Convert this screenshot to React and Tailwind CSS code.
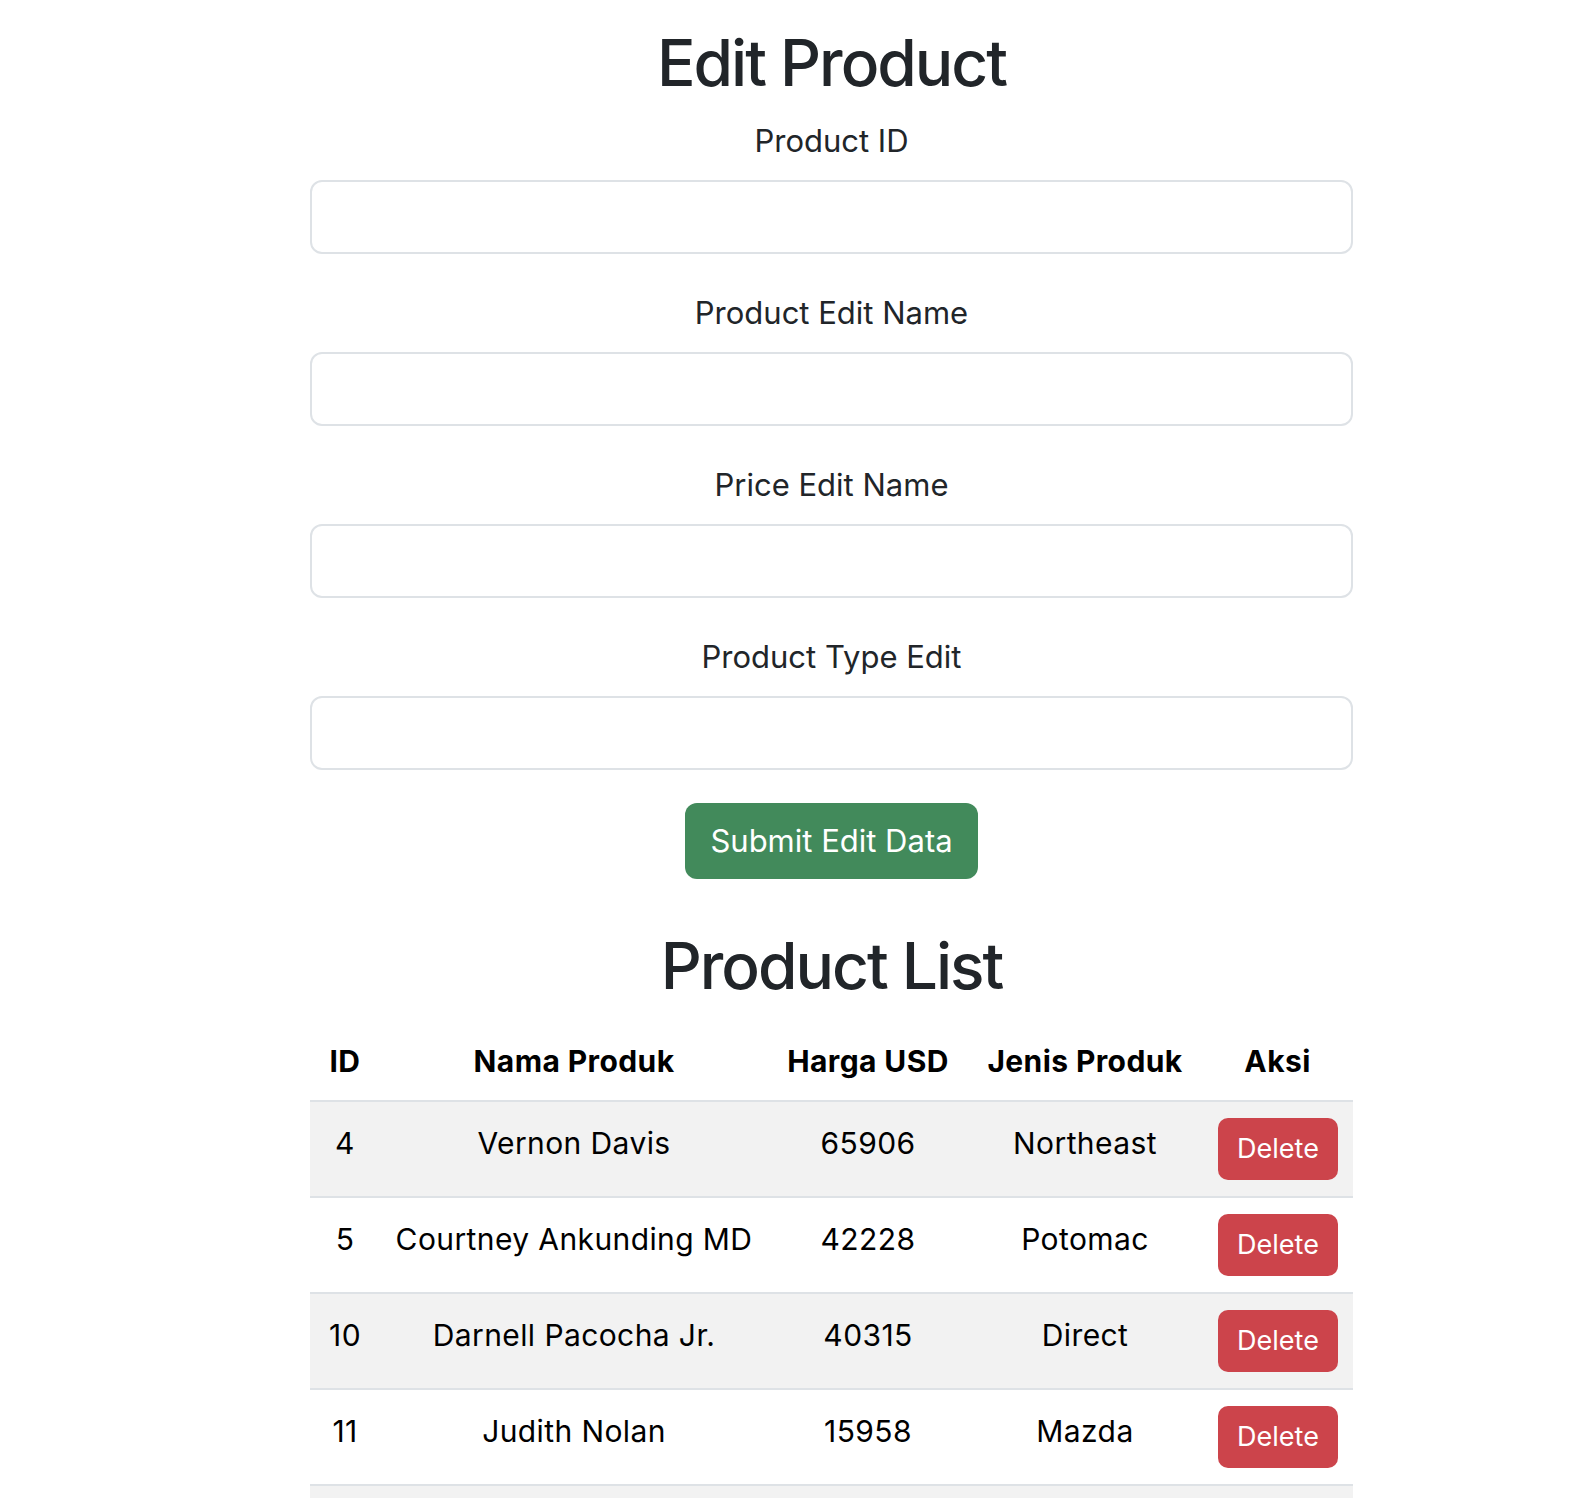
import React from "react";

const fields = ["Product ID", "Product Edit Name", "Price Edit Name", "Product Type Edit"];

const rows = [
  { id: 4, name: "Vernon Davis", price: 65906, type: "Northeast" },
  { id: 5, name: "Courtney Ankunding MD", price: 42228, type: "Potomac" },
  { id: 10, name: "Darnell Pacocha Jr.", price: 40315, type: "Direct" },
  { id: 11, name: "Judith Nolan", price: 15958, type: "Mazda" },
];

export default function App() {
  return (
    <div className="h-[1498px] overflow-hidden bg-white font-['Inter',sans-serif] text-[#212529]">
      <div className="ml-[310px] w-[1043px] pt-[24px]">
        <h1 className="h-[77px] text-center text-[64px] leading-[77px] font-medium tracking-[-2px]">
          Edit Product
        </h1>
        <form className="mt-[18px] flex flex-col gap-[37px]" onSubmit={(e) => e.preventDefault()}>
          {fields.map((f) => (
            <div key={f} className="flex flex-col">
              <label className="h-[44px] text-center text-[31px] leading-[44px]">{f}</label>
              <input
                type="text"
                className="mt-[17px] h-[74px] w-full rounded-[12px] border-2 border-[#dee2e6] bg-white px-[24px] text-[29px] outline-none"
              />
            </div>
          ))}
        </form>
        <div className="mt-[33px] flex justify-center">
          <button className="h-[76px] w-[293px] rounded-[12px] bg-[#428a5b] text-[31px] leading-[76px] text-white">
            Submit Edit Data
          </button>
        </div>
        <h2 className="mt-[48px] h-[77px] text-center text-[64px] leading-[77px] font-medium tracking-[-2px]">
          Product List
        </h2>
        <table className="mt-[18px] w-full table-fixed border-collapse text-[30px] leading-[46px] tracking-[0.4px] text-black">
          <colgroup>
            <col className="w-[70px]" />
            <col className="w-[388px]" />
            <col className="w-[200px]" />
            <col className="w-[234px]" />
            <col className="w-[151px]" />
          </colgroup>
          <thead>
            <tr className="border-b-2 border-[#dee2e6]">
              <th className="px-[4px] py-[16px] text-center align-top font-bold">ID</th>
              <th className="px-[4px] py-[16px] text-center align-top font-bold">Nama Produk</th>
              <th className="px-[4px] py-[16px] text-center align-top font-bold whitespace-nowrap">Harga USD</th>
              <th className="px-[4px] py-[16px] text-center align-top font-bold whitespace-nowrap">Jenis Produk</th>
              <th className="px-[4px] py-[16px] text-center align-top font-bold">Aksi</th>
            </tr>
          </thead>
          <tbody>
            {rows.map((r, i) => (
              <tr
                key={r.id}
                className={`border-b-2 border-[#dee2e6] ${i % 2 === 0 ? "bg-[#f2f2f2]" : "bg-white"}`}
              >
                <td className="px-[4px] pt-[18px] pb-[14px] text-center align-top">{r.id}</td>
                <td className="px-[4px] pt-[18px] pb-[14px] text-center align-top whitespace-nowrap">{r.name}</td>
                <td className="px-[4px] pt-[18px] pb-[14px] text-center align-top">{r.price}</td>
                <td className="px-[4px] pt-[18px] pb-[14px] text-center align-top">{r.type}</td>
                <td className="px-[16px] py-[16px] text-center align-top">
                  <button className="h-[62px] w-[120px] rounded-[10px] bg-[#cc444b] text-[27px] leading-[62px] tracking-normal text-white">
                    Delete
                  </button>
                </td>
              </tr>
            ))}
            <tr className="bg-[#f2f2f2]">
              <td className="h-[94px]" colSpan={5}></td>
            </tr>
          </tbody>
        </table>
      </div>
    </div>
  );
}
